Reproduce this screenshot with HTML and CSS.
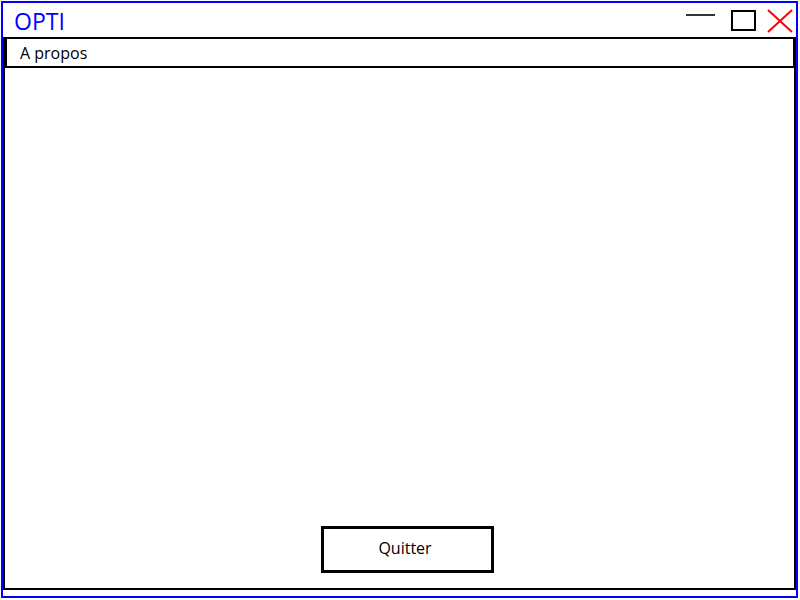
FILE: index.html
```html
<!DOCTYPE html>
<html lang="fr">
<head>
<meta charset="utf-8">
<title>OPTI</title>
<link rel="stylesheet" href="styles.css">
</head>
<body>
<div class="window">
  <div class="titlebar">
    <span class="title">OPTI</span>
    <div class="controls">
      <span class="ctl-min"></span>
      <span class="ctl-max"></span>
      <svg class="ctl-close" width="26" height="24" viewBox="0 0 26 24">
        <path d="M1 1 L25 23 M25 1 L1 23" stroke="#ff0000" stroke-width="2" fill="none"/>
      </svg>
    </div>
  </div>
  <div class="frame">
    <div class="menubar"><span class="menu-item">A propos</span></div>
    <div class="content">
      <button class="btn-quit" type="button">Quitter</button>
    </div>
  </div>
</div>
</body>
</html>
```
FILE: styles.css
```css
* { box-sizing: border-box; }
html, body { margin: 0; padding: 0; background: #ffffff; }
body { font-family: "Open Sans", "Noto Sans", sans-serif; }

.window {
  margin: 1px 0 0 1px;
  width: 797px;
  height: 597px;
  border: 2px solid #0000ff;
  display: flex;
  flex-direction: column;
  padding-bottom: 6px;
}

.titlebar {
  height: 34px;
  display: flex;
  align-items: center;
  justify-content: space-between;
  padding-left: 11px;
}
.title {
  color: #0000ff;
  font-size: 23px;
  line-height: 34px;
  margin-top: 1px;
}
.controls {
  display: flex;
  align-items: flex-start;
  height: 34px;
  padding-right: 3px;
}
.ctl-min {
  width: 29px;
  height: 2px;
  background: #333333;
  margin-top: 11px;
}
.ctl-max {
  width: 25px;
  height: 21px;
  border: 2px solid #000000;
  margin: 7px 0 0 16px;
}
.ctl-close {
  margin: 6px 0 0 11px;
}

.frame {
  flex: 1;
  border: 2px solid #000000;
  display: flex;
  flex-direction: column;
}
.menubar {
  height: 30px;
  margin-top: -1px;
  border-top: 1px solid #000000;
  border-left: 2px solid #000000;
  border-right: 1px solid #000000;
  border-bottom: 2px solid #000000;
  display: flex;
  align-items: center;
  padding: 1px 0 0 13px;
}
.menu-item {
  font-size: 16px;
  color: #000000;
}

.content {
  flex: 1;
  display: flex;
  flex-direction: column;
  justify-content: flex-end;
  align-items: center;
  padding: 0 0 15px 16px;
}
.btn-quit {
  width: 173px;
  height: 47px;
  border: 3px solid #000000;
  background: #ffffff;
  font-family: "Open Sans", "Noto Sans", sans-serif;
  font-size: 16px;
  color: #000000;
  padding: 0 5px 4px 0;
  border-radius: 0;
}
```
